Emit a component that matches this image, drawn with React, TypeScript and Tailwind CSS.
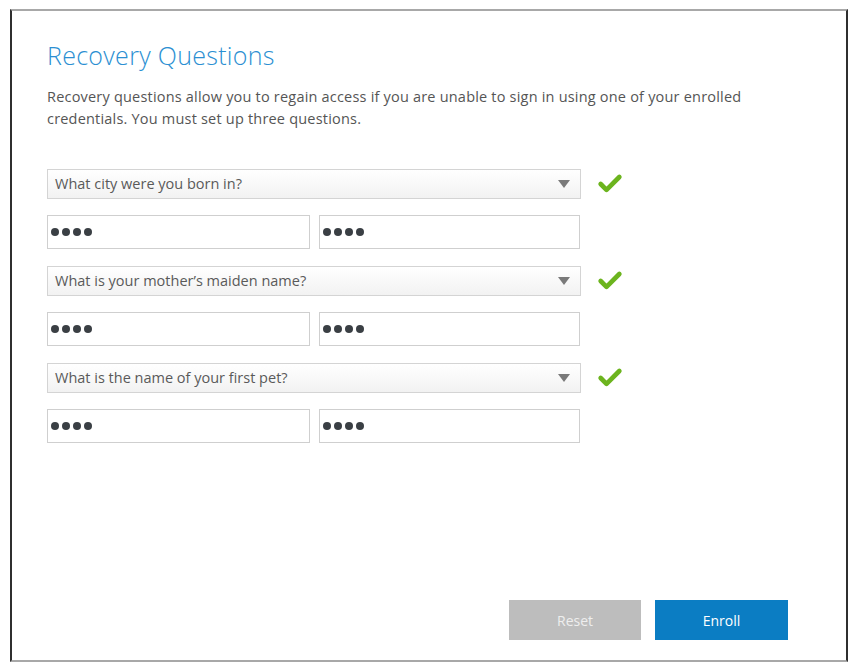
import { Check } from "lucide-react"

const groups = [
  "What city were you born in?",
  "What is your mother\u2019s maiden name?",
  "What is the name of your first pet?",
]

function Dots() {
  return (
    <div className="flex items-center gap-[3px] pl-[3px]">
      {[0, 1, 2, 3].map((i) => (
        <span key={i} className="block w-[8px] h-[8px] rounded-full bg-[#3a3f44]" />
      ))}
    </div>
  )
}

export default function App() {
  return (
    <div className="w-[853px] h-[666px] bg-white pt-[9px] pl-[10px] font-['Open_Sans',sans-serif]">
      <div className="w-[838px] h-[653px] border-x-2 border-x-[#2f2f2f] border-y-2 border-y-[#a8a8a8] flex flex-col pl-[35px] pt-[28px] pb-[20px]">
        <h1 className="text-[25px] leading-[32px] font-light text-[#2b8fd2] tracking-[0.3px]">Recovery Questions</h1>
        <p className="mt-[15px] text-[14.5px] leading-[22px] tracking-[0.2px] text-[#555] w-[770px]">
          Recovery questions allow you to regain access if you are unable to sign in using one of your enrolled
          <br />
          credentials. You must set up three questions.
        </p>

        <div className="mt-[39px] flex flex-col gap-[17px]">
          {groups.map((q, i) => (
            <div key={i} className="flex flex-col gap-[16px]">
              <div className="flex items-center">
                <div className="w-[534px] h-[30px] border border-[#d4d4d4] bg-gradient-to-b from-white to-[#f2f2f2] flex items-center justify-between pl-[7px] pr-[10px]">
                  <span className="text-[14.5px] text-[#5a5a5a]">{q}</span>
                  <svg width="12" height="8" viewBox="0 0 12 8">
                    <path d="M0 0 H12 L6 8 Z" fill="#7a7a7a" />
                  </svg>
                </div>
                <Check className="ml-[15px] w-[28px] h-[28px] text-[#6cb41e]" strokeWidth={4} />
              </div>
              <div className="flex gap-[9px]">
                <div className="w-[263px] h-[34px] border border-[#cfcfcf] bg-white flex items-center">
                  <Dots />
                </div>
                <div className="w-[261px] h-[34px] border border-[#cfcfcf] bg-white flex items-center">
                  <Dots />
                </div>
              </div>
            </div>
          ))}
        </div>

        <div className="mt-auto flex gap-[14px] pl-[462px]">
          <button className="w-[132px] h-[40px] bg-[#bdbdbd] text-[#eeeeee] text-[14px]">Reset</button>
          <button className="w-[133px] h-[40px] bg-[#0b7dc3] text-white text-[14px]">Enroll</button>
        </div>
      </div>
    </div>
  )
}
